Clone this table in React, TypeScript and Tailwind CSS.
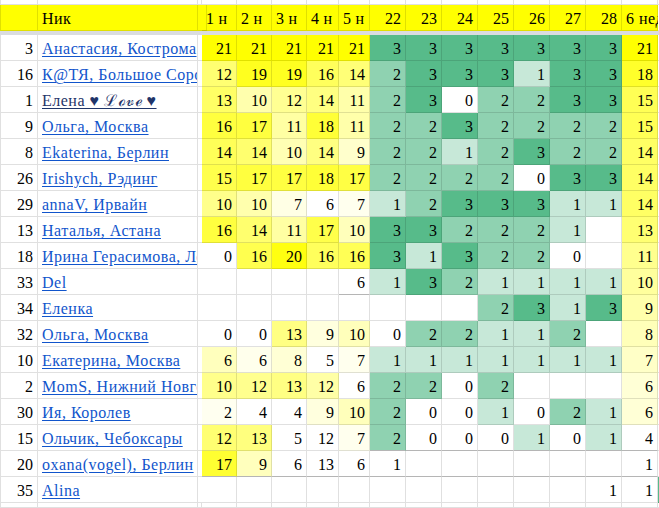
import React from 'react';

type Row = {
  id: number;
  name: string;
  weeks: (number | null)[];
  days: (number | null)[];
  total: number;
  dark?: boolean;
  // cells left without fill in the sheet
  plain?: string[];
  edge?: boolean;
};

const _ = null;

const rows: Row[] = [
  { id: 3, name: 'Анастасия, Кострома', weeks: [21, 21, 21, 21, 21], days: [3, 3, 3, 3, 3, 3, 3], total: 21 },
  { id: 16, name: 'К@ТЯ, Большое Сорокино', weeks: [12, 19, 19, 16, 14], days: [2, 3, 3, 3, 1, 3, 3], total: 18 },
  { id: 1, name: 'Елена ♥ ℒℴ𝓋ℯ ♥', weeks: [13, 10, 12, 14, 11], days: [2, 3, 0, 2, 2, 3, 3], total: 15, dark: true },
  { id: 9, name: 'Ольга, Москва', weeks: [16, 17, 11, 18, 11], days: [2, 2, 3, 2, 2, 2, 2], total: 15 },
  { id: 8, name: 'Ekaterina, Берлин', weeks: [14, 14, 10, 14, 9], days: [2, 2, 1, 2, 3, 2, 2], total: 14 },
  { id: 26, name: 'Irishych, Рэдинг', weeks: [15, 17, 17, 18, 17], days: [2, 2, 2, 2, 0, 3, 3], total: 14 },
  { id: 29, name: 'annaV, Ирвайн', weeks: [10, 10, 7, 6, 7], days: [1, 2, 3, 3, 3, 1, 1], total: 14 },
  { id: 13, name: 'Наталья, Астана', weeks: [16, 14, 11, 17, 10], days: [3, 3, 2, 2, 2, 1, _], total: 13 },
  { id: 18, name: 'Ирина Герасимова, Лондон', weeks: [0, 16, 20, 16, 16], days: [3, 1, 3, 2, 2, 0, _], total: 11 },
  { id: 33, name: 'Del', weeks: [_, _, _, _, 6], days: [1, 3, 2, 1, 1, 1, 1], total: 10 },
  { id: 34, name: 'Еленка', weeks: [_, _, _, _, _], days: [_, _, _, 2, 3, 1, 3], total: 9 },
  { id: 32, name: 'Ольга, Москва', weeks: [0, 0, 13, 9, 10], days: [0, 2, 2, 1, 1, 2, _], total: 8 },
  { id: 10, name: 'Екатерина, Москва', weeks: [6, 6, 8, 5, 7], days: [1, 1, 1, 1, 1, 1, 1], total: 7 },
  { id: 2, name: 'MomS, Нижний Новгород', weeks: [10, 12, 13, 12, 6], days: [2, 2, 0, 2, _, _, _], total: 6 },
  { id: 30, name: 'Ия, Королев', weeks: [2, 4, 4, 9, 10], days: [2, 0, 0, 1, 0, 2, 1], total: 6 },
  { id: 15, name: 'Ольчик, Чебоксары', weeks: [12, 13, 5, 12, 7], days: [2, 0, 0, 0, 1, 0, 1], total: 4, plain: ['w3', 't'], edge: true },
  { id: 20, name: 'oxana(vogel), Берлин', weeks: [17, 9, 6, 13, 6], days: [1, _, _, _, _, _, _], total: 1, plain: ['w2', 'w3', 'w4', 'd0', 't'], edge: true },
  { id: 35, name: 'Alina', weeks: [_, _, _, _, _], days: [_, _, _, _, _, _, 1], total: 1, plain: ['d6', 't'] },
];

const weekHeads = ['1 н', '2 н', '3 н', '4 н', '5 н'];
const dayHeads = ['22', '23', '24', '25', '26', '27', '28'];

// color scale: min at 10th percentile, max at max
function percentile(vals: number[], p: number) {
  const s = [...vals].sort((a, b) => a - b);
  const r = p * (s.length - 1);
  const lo = Math.floor(r);
  const hi = Math.ceil(r);
  return s[lo] + (s[hi] - s[lo]) * (r - lo);
}

function scale(vals: number[]) {
  const min = percentile(vals, 0.1);
  const max = Math.max(...vals);
  return (v: number) => Math.min(1, Math.max(0, (v - min) / (max - min)));
}

const weekScales = weekHeads.map((_h, i) =>
  scale(rows.map((r) => r.weeks[i]).filter((v): v is number => v !== null))
);
const totalScale = scale(rows.map((r) => r.total));

function yellow(t: number) {
  return `rgb(255,255,${Math.round(255 * (1 - t))})`;
}

function green(v: number) {
  const t = v / 3;
  return `rgb(${Math.round(255 - 168 * t)},${Math.round(255 - 68 * t)},${Math.round(255 - 117 * t)})`;
}

const grid =
  'grid grid-cols-[38px_160px_4px_35px_35px_35px_32px_31px_repeat(8,36px)_20px]';
const cell =
  'flex items-end px-[4px] pb-[2px] leading-[18px] border-r border-b border-black/[0.12] overflow-hidden whitespace-nowrap';
const first = 'shadow-[inset_1px_0_0_rgba(0,0,0,0.12)]';

function EmptyRow({ h }: { h: string }) {
  return (
    <div className={`${grid} ${h}`}>
      {Array.from({ length: 17 }).map((_v, i) => (
        <div key={i} className={`border-r border-b border-black/[0.12] ${i === 0 ? first : ''}`} />
      ))}
    </div>
  );
}

export default function App() {
  return (
    <div
      className="w-[659px] h-[508px] overflow-hidden bg-white text-[16px] text-black"
      style={{ fontFamily: '"Liberation Serif", "DejaVu Serif", serif' }}
    >
      <div className="w-[678px]">
        <EmptyRow h="h-[5px]" />

        {/* header */}
        <div className={`${grid} h-[26px] bg-[#ffff00]`}>
          <div className={`${cell} ${first}`} />
          <div className={`${cell} tracking-[0.4px]`}>Ник</div>
          <div className={cell} />
          {weekHeads.map((h) => (
            <div key={h} className={`${cell} tracking-[0.3px]`}>
              {h}
            </div>
          ))}
          {dayHeads.map((h) => (
            <div key={h} className={`${cell} justify-end`}>
              {h}
            </div>
          ))}
          <div className={`${cell} overflow-visible tracking-[0.5px]`}>6 нед.</div>
          <div className="border-b border-black/[0.12] bg-white" />
        </div>

        {/* frozen divider */}
        <div className="h-[4px] bg-[#dadce0]" />

        {rows.map((r) => {
          const plain = (k: string) => r.plain?.includes(k);
          const edge = r.edge ? 'border-b-[#b5b5b5]' : '';
          return (
            <div key={r.id + r.name} className={`${grid} h-[26px]`}>
              <div className={`${cell} ${first} justify-end`}>{r.id}</div>
              <div className={`${cell} tracking-[0.5px]`}>
                <a
                  href="#"
                  className={`underline underline-offset-[2px] ${r.dark ? 'text-[#1f3569]' : 'text-[#1155cc]'}`}
                >
                  {r.name}
                </a>
              </div>
              <div className={cell} />
              {r.weeks.map((v, i) => (
                <div
                  key={'w' + i}
                  className={`${cell} justify-end ${r.id === 20 ? edge : ''} ${r.id === 33 && i === 4 ? 'border-b-[#b5b5b5]' : ''}`}
                  style={{
                    backgroundColor:
                      v === null || plain('w' + i) ? '#ffffff' : yellow(weekScales[i](v)),
                  }}
                >
                  {v}
                </div>
              ))}
              {r.days.map((v, i) => (
                <div
                  key={'d' + i}
                  className={`${cell} justify-end ${edge}`}
                  style={{ backgroundColor: v === null || plain('d' + i) ? '#ffffff' : green(v) }}
                >
                  {v}
                </div>
              ))}
              <div
                className={`${cell} justify-end ${edge}`}
                style={{ backgroundColor: plain('t') ? '#ffffff' : yellow(totalScale(r.total)) }}
              >
                {r.total}
              </div>
              <div className={`border-b border-black/[0.12] ${r.id === 35 ? 'bg-[#57bb8a]' : ''}`} />
            </div>
          );
        })}

        <EmptyRow h="h-[5px]" />
      </div>
    </div>
  );
}
